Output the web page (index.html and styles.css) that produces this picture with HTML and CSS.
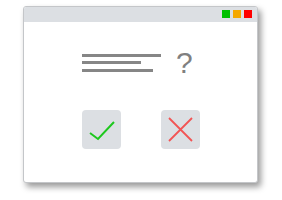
FILE: index.html
```html
<!DOCTYPE html>
<html>
<head>
<meta charset="utf-8">
<link rel="stylesheet" href="styles.css">
</head>
<body>
<div class="window">
  <div class="titlebar">
    <span class="dot green"></span>
    <span class="dot orange"></span>
    <span class="dot red"></span>
  </div>
  <div class="content">
    <div class="question">
      <div class="lines">
        <div class="line l1"></div>
        <div class="line l2"></div>
        <div class="line l3"></div>
      </div>
      <div class="qmark">?</div>
    </div>
    <div class="buttons">
      <div class="btn">
        <svg width="39" height="39" viewBox="0 0 39 39"><path d="M8 23 L16 29 L32 12" fill="none" stroke="#1ec81e" stroke-width="2"/></svg>
      </div>
      <div class="btn">
        <svg width="39" height="39" viewBox="0 0 39 39"><path d="M8 8 L31 31 M31 8 L8 31" fill="none" stroke="#f25454" stroke-width="1.8"/></svg>
      </div>
    </div>
  </div>
</div>
</body>
</html>
```
FILE: styles.css
```css
html, body {
  margin: 0;
  padding: 0;
  background: #ffffff;
}
body {
  width: 282px;
  height: 200px;
  overflow: hidden;
  font-family: "Liberation Sans", Arial, sans-serif;
}
.window {
  margin: 6px 0 0 23px;
  width: 235px;
  height: 177px;
  box-sizing: border-box;
  border: 1px solid #c4c6c9;
  border-radius: 3px;
  background: #ffffff;
  box-shadow: 3px 4px 6px rgba(0, 0, 0, 0.4);
  overflow: hidden;
  display: flex;
  flex-direction: column;
}
.titlebar {
  height: 15px;
  background: #dcdfe3;
  display: flex;
  justify-content: flex-end;
  align-items: flex-start;
  gap: 3px;
  padding: 3px 5px 0 0;
  box-sizing: border-box;
}
.dot {
  width: 8px;
  height: 8px;
}
.green { background: #00c000; }
.orange { background: #f5a800; }
.red { background: #ff0000; }
.content {
  padding-left: 58px;
  display: flex;
  flex-direction: column;
}
.question {
  margin-top: 26px;
  display: flex;
  align-items: flex-start;
}
.lines {
  margin-top: 6px;
  width: 79px;
  display: flex;
  flex-direction: column;
}
.line {
  height: 3px;
  background: #868686;
}
.l1 { width: 79px; }
.l2 { width: 59px; margin-top: 4px; }
.l3 { width: 71px; margin-top: 5px; }
.qmark {
  margin-left: 15px;
  font-size: 30px;
  line-height: 30px;
  color: #808080;
}
.buttons {
  margin-top: 32px;
  display: flex;
  gap: 40px;
}
.btn {
  width: 39px;
  height: 39px;
  border-radius: 4px;
  background: #dcdfe3;
}
.btn svg {
  display: block;
}
```
